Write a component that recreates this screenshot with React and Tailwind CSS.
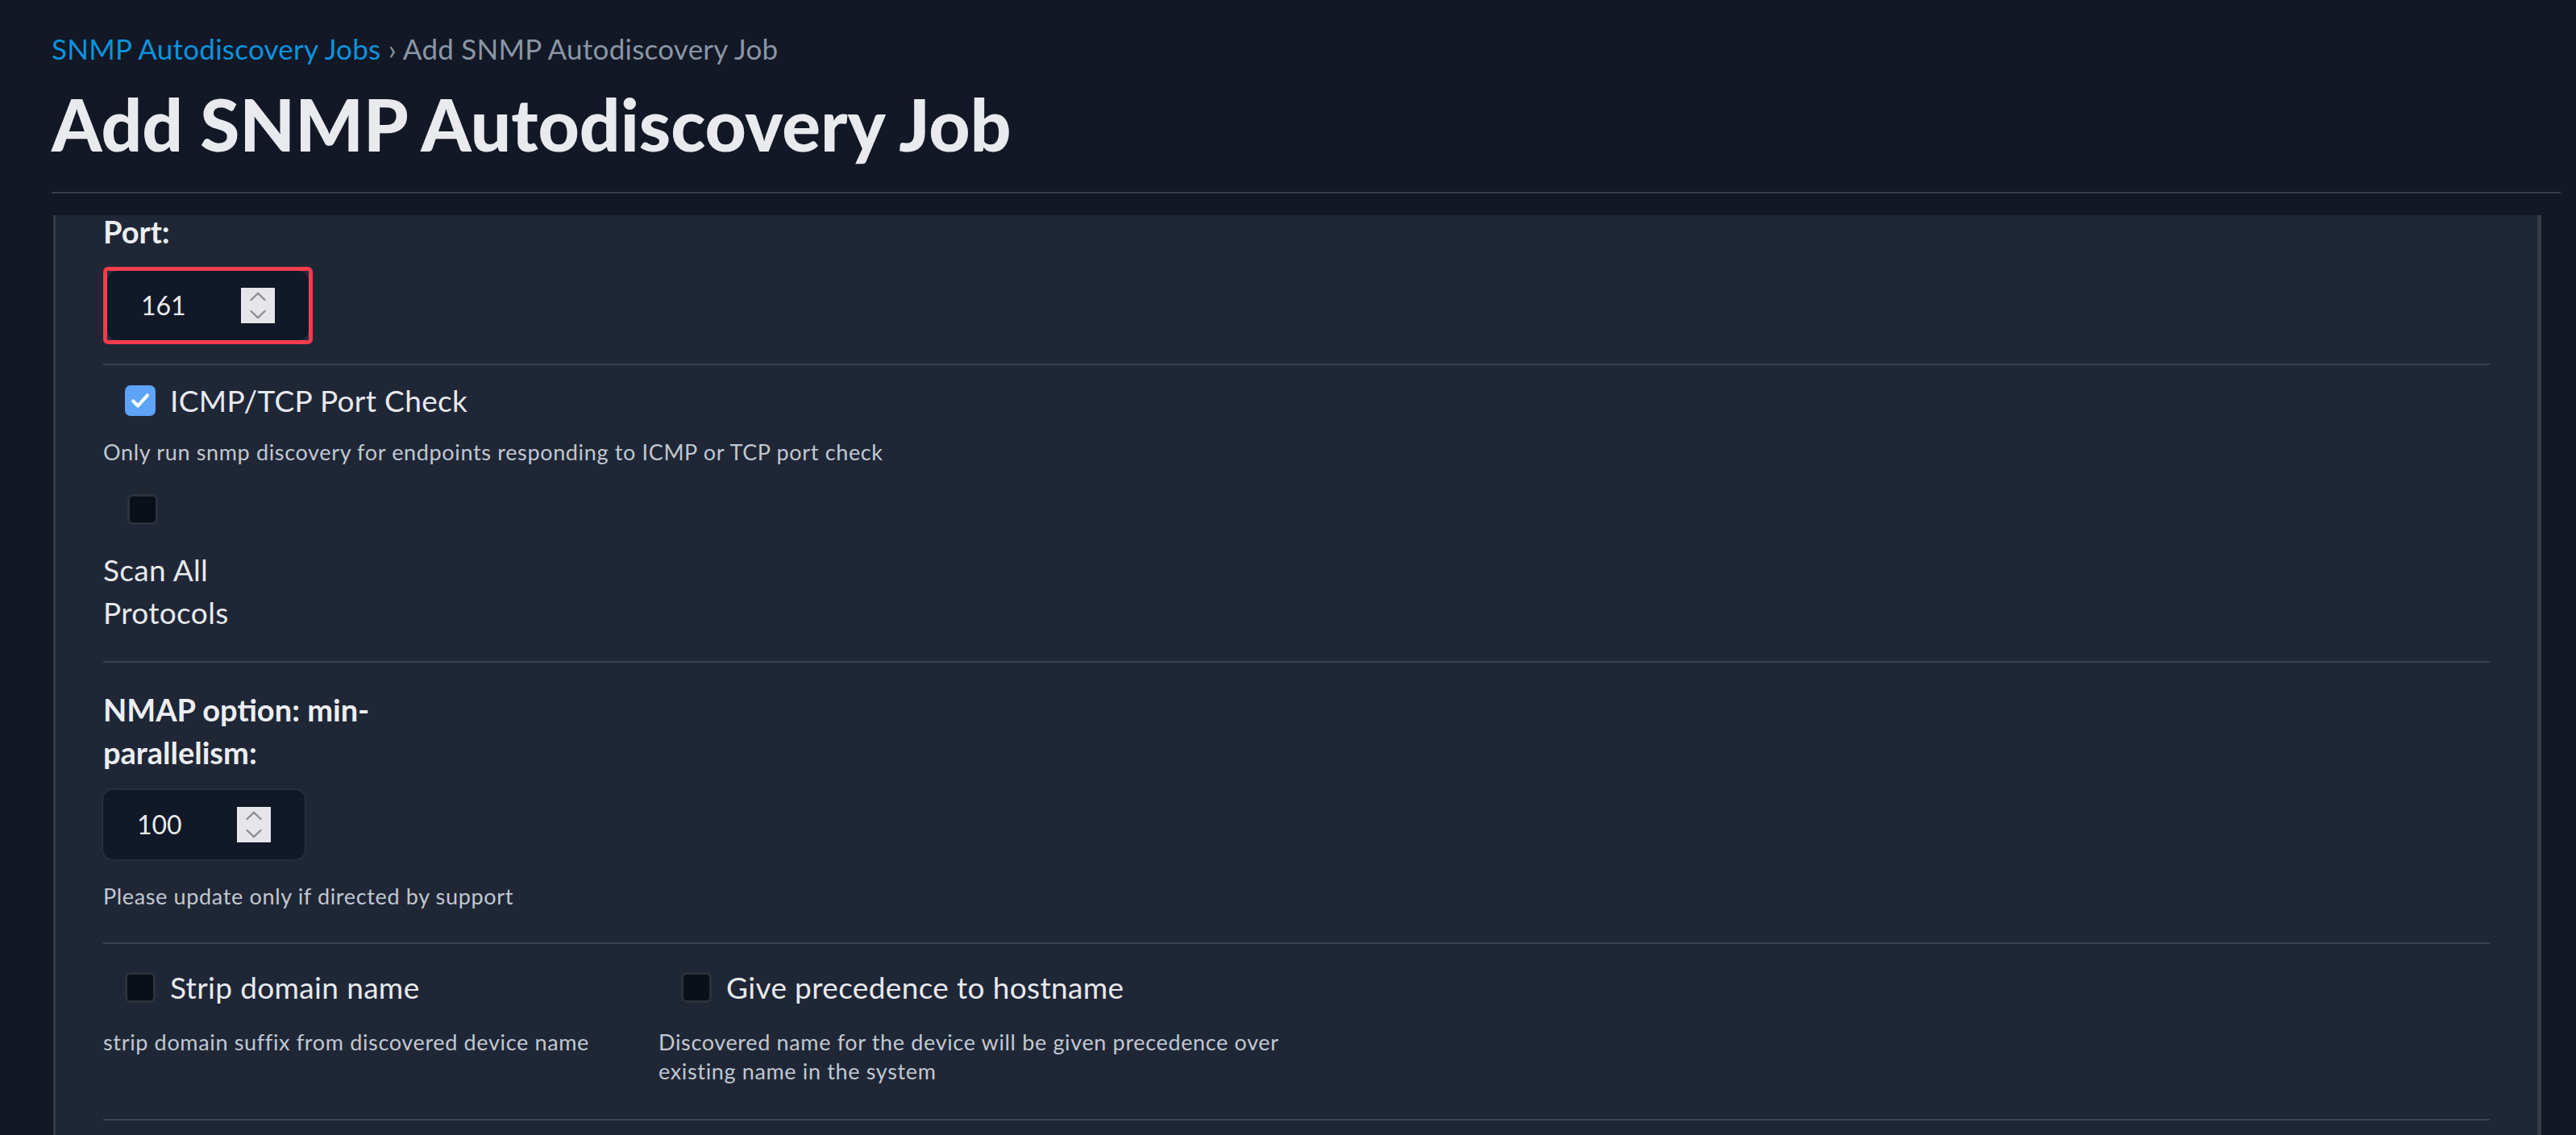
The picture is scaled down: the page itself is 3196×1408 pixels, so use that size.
import React from 'react';

const font = { fontFamily: 'Lato, "Noto Sans", sans-serif' };

function Spinner() {
  return (
    <div className="flex h-[44px] w-[42px] flex-col items-center justify-center bg-[#e6e6ea]">
      <svg width="20" height="34" viewBox="0 0 20 34" fill="none" stroke="#8d8d96" strokeWidth="2.4" strokeLinecap="round" strokeLinejoin="round">
        <path d="M1.5 10 L10 1.8 L18.5 10" />
        <path d="M1.5 24 L10 32.2 L18.5 24" />
      </svg>
    </div>
  );
}

function NumberInput({ value }) {
  return (
    <div className="flex h-[86px] w-[250px] items-center rounded-xl bg-[#111827] pl-[42px] shadow-[0_0_3px_rgba(255,255,255,0.15)]">
      <span className="w-[124px] text-[32px] leading-none text-[#e8e9ec]">{value}</span>
      <Spinner />
    </div>
  );
}

function Checkbox({ checked }) {
  if (checked) {
    return (
      <div className="flex h-[38px] w-[38px] shrink-0 items-center justify-center rounded-[7px] bg-[#5da3f7]">
        <svg width="28" height="28" viewBox="0 0 24 24" fill="none" stroke="white" strokeWidth="3.6" strokeLinecap="round" strokeLinejoin="round">
          <path d="M4.5 12.5 L9.5 17.5 L19.5 6.5" />
        </svg>
      </div>
    );
  }
  return <div className="h-[38px] w-[38px] shrink-0 rounded-[7px] border-[3px] border-[#2c313b] bg-[#0b0f19]" />;
}

function Divider() {
  return <div className="h-[2px] w-full bg-[#3a4250]" />;
}

const labelCls = 'text-[37px] leading-[53px] tracking-[0.35px] text-[#e8e9ec]';
const helpCls = 'text-[27px] leading-[36px] tracking-[0.65px] text-[#c2c7cf]';

export default function App() {
  return (
    <div className="h-[1408px] overflow-hidden bg-[#121826]" style={font}>
      <div className="pl-[64px] pt-[38px]">
        <div className="text-[35px] leading-[44px] tracking-[0.25px]">
          <span className="text-[#0c93dd]">SNMP Autodiscovery Jobs</span>
          <span className="text-[#8b95a3]"> › Add SNMP Autodiscovery Job</span>
        </div>
        <h1 className="mt-[22px] text-[89px] font-black leading-[100px] text-[#e9eaee]">Add SNMP Autodiscovery Job</h1>
      </div>
      <div className="ml-[64px] mr-[19px] mt-[34px] h-[2px] bg-[#363d4a]" />

      <div className="ml-[66px] mr-[43px] mt-[27px] h-[1200px] border-l-[3px] border-r-[5px] border-[#353b47] bg-[#1f2737] px-[59px]">
        {/* Port */}
        <div className="text-[38px] font-bold leading-[40px] text-[#eceef1]">Port:</div>
        <div className="mt-[24px] w-fit rounded-md border-[5px] border-[#f23b4c]">
          <NumberInput value="161" />
        </div>
        <div className="mt-[24px]"><Divider /></div>

        {/* ICMP / Scan all */}
        <div className="mt-[17px] flex items-center pl-[27px]">
          <Checkbox checked />
          <span className={`ml-[18px] ${labelCls}`}>ICMP/TCP Port Check</span>
        </div>
        <p className={`mt-[20px] ${helpCls}`}>
          Only run snmp discovery for endpoints responding to ICMP or TCP port check
        </p>
        <div className="mt-[34px] pl-[30px]">
          <Checkbox />
        </div>
        <div className={`mt-[29px] w-[240px] ${labelCls}`}>Scan All Protocols</div>
        <div className="mt-[34px]"><Divider /></div>

        {/* NMAP */}
        <div className="mt-[32px] w-[345px] text-[38px] font-bold leading-[53px] text-[#eceef1]">NMAP option: min-parallelism:</div>
        <div className="mt-[20px]">
          <NumberInput value="100" />
        </div>
        <p className={`mt-[28px] ${helpCls}`}>Please update only if directed by support</p>
        <div className="mt-[39px]"><Divider /></div>

        {/* Strip / precedence */}
        <div className="mt-[27px] flex">
          <div className="w-[689px]">
            <div className="flex items-center pl-[27px]">
              <Checkbox />
              <span className={`ml-[18px] ${labelCls}`}>Strip domain name</span>
            </div>
            <p className={`mt-[24px] ${helpCls}`}>strip domain suffix from discovered device name</p>
          </div>
          <div className="w-[800px]">
            <div className="flex items-center pl-[28px]">
              <Checkbox />
              <span className={`ml-[18px] ${labelCls}`}>Give precedence to hostname</span>
            </div>
            <p className={`mt-[24px] ${helpCls}`}>
              Discovered name for the device will be given precedence over existing name in the system
            </p>
          </div>
        </div>
        <div className="mt-[41px]"><Divider /></div>
      </div>
    </div>
  );
}
